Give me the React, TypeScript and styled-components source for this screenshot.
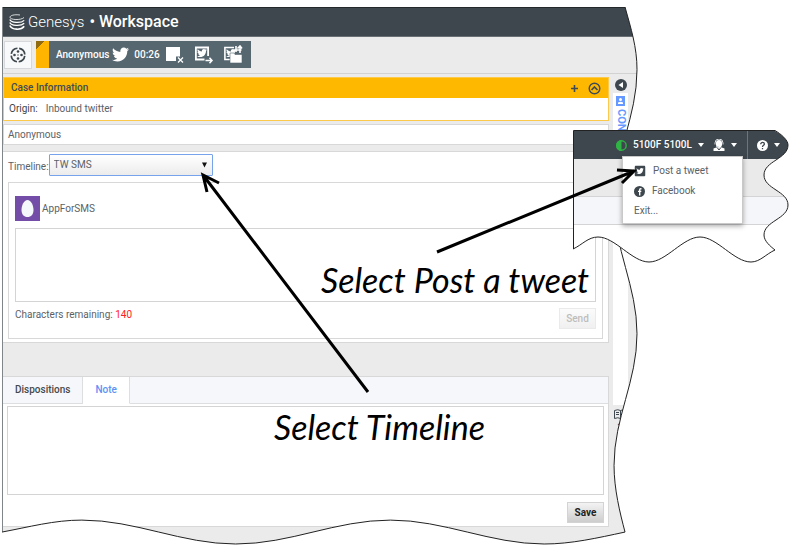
import React from "react";
import styled, { createGlobalStyle, css } from "styled-components";
import { FaTwitter, FaTwitterSquare } from "react-icons/fa";

const GlobalStyle = createGlobalStyle`
  *, *::before, *::after { box-sizing: border-box; }
  html, body { margin: 0; background: #fff; }
  body { font: 10px/14px Roboto, "Liberation Sans", sans-serif; color: #5b6267; overflow-x: hidden; }
  button, select, textarea { font: inherit; color: inherit; margin: 0; }
  button { padding: 0; border: 0; background: none; cursor: pointer; }
  svg { display: block; }
`;

const Stage = styled.div`
  position: relative;
  padding: 7px 162px 13px 2px;
`;

const Window = styled.main`
  position: relative;
  background: #ebebeb;
  border-left: 1px solid #808688;
  padding-bottom: 18px;
`;

const TitleBar = styled.header`
  display: flex;
  align-items: center;
  height: 30px;
  padding: 0 6px;
  background: #3d474d;
  border-top: 1px solid #23282b;
  border-bottom: 1px solid #687075;
  color: #fff;
  font-size: 16px;
  line-height: 20px;
`;

const Brand = styled.span`
  margin-left: 3px;
  font-size: 15px;
  font-weight: 300;
`;

const Product = styled.h1`
  margin: 0;
  margin-left: 5px;
  font-size: 16px;
  font-weight: 500;
`;

const Toolbar = styled.div`
  display: flex;
  align-items: center;
  height: 37px;
  padding: 0 1px 1px;
  gap: 4px;
  border-bottom: 1px solid #d2d2d2;
`;

const SquareButton = styled.button`
  display: grid;
  place-items: center;
  width: 28px;
  height: 28px;
  background: #f8f9fb;
  border: 1px solid #d6d8db;
`;

const Interaction = styled.div`
  display: flex;
  align-items: center;
  height: 27px;
  padding-right: 8px;
  background: #566770;
  color: #fff;
  font-weight: 500;
`;

const Flag = styled.span`
  width: 13px;
  height: 27px;
  margin-right: 7px;
  background: linear-gradient(135deg, #8f6a10 0 6px, #ffb400 6px);
`;

const InteractionIcon = styled.button<{ $gap?: number }>`
  display: grid;
  place-items: center;
  margin-left: ${(p) => p.$gap ?? 9}px;
`;

const Timer = styled.span`
  margin-left: 5px;
`;

const Body = styled.div`
  display: grid;
  grid-template-columns: minmax(0, 1fr) 15px;
  column-gap: 4px;
  padding: 3px 10px 0 0;
`;

const Column = styled.div`
  min-width: 0;
`;

const CaseBox = styled.section`
  background: #fff;
  border: 1px solid #fcc94a;
`;

const CaseHeader = styled.div`
  display: flex;
  align-items: center;
  height: 20px;
  padding: 0 7px;
  background: #ffb800;
  color: #3f4c55;
`;

const CaseTitle = styled.h2`
  flex: 1;
  margin: 0;
  font-size: 10px;
  font-weight: 500;
`;

const HeaderActions = styled.div`
  display: flex;
  align-items: center;
  gap: 10px;
`;

const Field = styled.div`
  display: flex;
  gap: 8px;
  height: 22px;
  padding: 4px 5px;
`;

const FieldLabel = styled.span`
  color: #3f4548;
`;

const ContactBar = styled.div`
  height: 21px;
  margin-top: 3px;
  padding: 3px 4px;
  background: #fff;
  border: 1px solid #d8d8d8;
`;

const Panel = styled.section`
  background: #fff;
  border: 1px solid #d8d8d8;
  border-left: 0;
`;

const TimelinePanel = styled(Panel)`
  margin-top: 6px;
  padding: 2px 5px 3px;
`;

const TimelineRow = styled.div`
  display: flex;
  align-items: center;
  height: 22px;
`;

const TimelineLabel = styled.label`
  padding-top: 3px;
`;

const SelectWrap = styled.div`
  position: relative;
  width: 164px;
`;

const Select = styled.select`
  display: block;
  width: 100%;
  height: 22px;
  padding: 0 4px;
  appearance: none;
  background: linear-gradient(#fff, #ececec);
  border: 1px solid #76a3ec;
  border-radius: 1px;
  outline: 0;
`;

const Caret = styled.svg`
  position: absolute;
  top: 8px;
  right: 6px;
  pointer-events: none;
`;

const Composer = styled.div`
  margin-top: 6px;
  padding: 13px 6px 9px;
  border: 1px solid #d8d8d8;
`;

const Sender = styled.div`
  display: flex;
  align-items: center;
  gap: 2px;
  margin-bottom: 7px;
`;

const Avatar = styled.span`
  display: grid;
  place-items: center;
  width: 25px;
  height: 25px;
  background: #744da9;
`;

const TextBox = styled.textarea<{ $rows: number }>`
  display: block;
  width: 100%;
  height: ${(p) => p.$rows}px;
  resize: none;
  background: #fff;
  border: 1px solid #d4d4d4;
  outline: 0;
`;

const ComposerFooter = styled.div`
  display: flex;
  align-items: flex-start;
  justify-content: space-between;
  padding-top: 6px;
`;

const Remaining = styled.span`
  strong { color: #ff2020; font-weight: 400; }
`;

const ActionButton = styled.button`
  width: 37px;
  height: 21px;
  background: linear-gradient(#f3f3f3, #cdcdcd);
  border: 1px solid #d3d3d3;
  color: #222;
  font-weight: 700;

  &:disabled {
    background: linear-gradient(#fbfbfb, #f0f0f0);
    border-color: #eaeaea;
    color: #bdbdbd;
    font-weight: 500;
    cursor: default;
  }
`;

const NotePanel = styled(Panel)`
  margin-top: 33px;
`;

const Tabs = styled.div`
  display: flex;
  height: 27px;
  background: #f5f7fa;
`;

const Tab = styled.button<{ $active?: boolean }>`
  padding: 0 12px;
  border-right: 1px solid #dcdee0;
  border-bottom: 1px solid #dcdee0;
  color: #45494d;
  font-weight: 500;
  ${(p) =>
    p.$active &&
    css`
      background: #fff;
      border-bottom-color: #fff;
      color: #5c93f5;
    `}
`;

const TabFill = styled.div`
  flex: 1;
  border-bottom: 1px solid #dcdee0;
`;

const NoteBody = styled.div`
  padding: 2px 4px 3px;
`;

const NoteFooter = styled.div`
  display: flex;
  justify-content: flex-end;
  padding-top: 7px;
`;

const Rail = styled.aside`
  display: flex;
  flex-direction: column;
`;

const RailToggle = styled.button`
  display: grid;
  place-items: center;
  height: 16px;
`;

const RailTab = styled.button<{ $active?: boolean }>`
  display: flex;
  flex-direction: column;
  align-items: center;
  gap: 3px;
  height: ${(p) => (p.$active ? 312 : 100)}px;
  padding-top: ${(p) => (p.$active ? 3 : 4)}px;
  background: ${(p) => (p.$active ? "#fff" : "transparent")};
  color: ${(p) => (p.$active ? "#6699ff" : "#3d474d")};
  font-size: 11px;
  line-height: 14px;
  font-weight: 700;
  span { writing-mode: vertical-rl; }
`;

const TornEdge = styled.svg`
  position: absolute;
  top: 0;
  left: -1px;
  width: calc(100% + 3px);
  height: calc(100% + 1px);
  pointer-events: none;
`;

const Inset = styled.section`
  position: absolute;
  top: 130px;
  right: 10px;
  width: 217px;
  height: 134px;
`;

const InsetPage = styled.div`
  height: 100%;
  background: #fff;
  clip-path: path("M0 1 H202 C208 4 215 10 215 15 C215 29 191 31 191 45 C191 59 215 61 215 75 C215 89 191 91 191 105 C191 111 197 116 202 120 C193 124 187 132 178 132 C161 132 144 107 127 107 C110 107 93 132 76 132 C59 132 42 107 25 107 C15 107 9 115 0 119 Z");
`;

const InsetBar = styled.div`
  display: flex;
  align-items: center;
  height: 29px;
  padding: 1px 0 0 43px;
  background: #3d474d;
  color: #fff;
  font-weight: 500;
`;

const BarButton = styled.button`
  display: flex;
  align-items: center;
  gap: 6px;
`;

const BarGroup = styled.div`
  display: flex;
  align-items: center;
  height: 100%;
  padding: 0 10px 0 9px;
  border-right: 1px solid #6c757a;
`;

const HelpGroup = styled.div`
  padding-left: 9px;
`;

const InsetBand = styled.div<{ $tone: "dark" | "light" }>`
  height: ${(p) => (p.$tone === "dark" ? 38 : 28)}px;
  background: ${(p) => (p.$tone === "dark" ? "#eaeaea" : "#f5f6f9")};
  border-bottom: 1px solid #d4d4d6;
`;

const InsetEdge = styled.svg`
  position: absolute;
  inset: 0;
  pointer-events: none;
`;

const Menu = styled.ul`
  position: absolute;
  top: 26px;
  left: 49px;
  width: 121px;
  margin: 0;
  padding: 4px 0 2px;
  list-style: none;
  background: #fff;
  border: 1px solid #c9c9c9;
  box-shadow: 0 2px 5px rgba(0, 0, 0, 0.35);
`;

const MenuItem = styled.button`
  display: flex;
  align-items: center;
  gap: 7px;
  width: 100%;
  height: 20px;
  padding: 0 11px;
`;

const Arrows = styled.svg`
  position: absolute;
  top: 0;
  left: 0;
  pointer-events: none;
`;

const Callout = styled.p<{ $x: number; $y: number }>`
  position: absolute;
  left: ${(p) => p.$x}px;
  top: ${(p) => p.$y}px;
  margin: 0;
  color: #000;
  font: italic 400 34px/40px "Segoe Print", Lato, cursive;
  white-space: nowrap;
`;

const Down = () => (
  <svg width="6" height="4" viewBox="0 0 6 4"><path d="M0 0h6L3 4z" fill="#fff" /></svg>
);

const TEAR_RIGHT =
  "C630 22 636 40 636 63 C636 111 613 147 613 195 C613 243 636 280 636 328 C636 376 613 412 613 460 C613 484 619 508 624 527";
const TEAR_BOTTOM =
  "C596 533 570 539 543 539 C489 539 443 515 389 515 C334 515 289 539 234 539 C180 539 134 515 80 515 C52 515 27 522 0 527";
const INSET_LINE =
  "M0.5 119 V0.5 H202 C208 4 215 10 215 15 C215 29 191 31 191 45 C191 59 215 61 215 75 C215 89 191 91 191 105 C191 111 197 116 202 120 C193 124 187 132 178 132 C161 132 144 107 127 107 C110 107 93 132 76 132 C59 132 42 107 25 107 C15 107 9 115 0 119";

export default function App() {
  return (
    <>
      <GlobalStyle />
      <Stage>
        <Window>
          <TitleBar>
            <svg width="16" height="17" viewBox="0 0 16 17" fill="none" stroke="#fff">
              <path d="M11 1C5 .2 1 1.500 1 3.300 1 6 12 6.500 15 3.500" strokeWidth=".8" />
              <path d="M.8 5.500C2 9 12 9.500 15.200 6.300" strokeWidth="1.200" />
              <path d="M.8 8.500C2 12 12 12.500 15.200 9.300" strokeWidth="1.300" />
              <path d="M.8 11.500C3 16 12 16.500 15.200 12.300" strokeWidth="1.600" />
            </svg>
            <Brand>Genesys</Brand>
            <Product>• Workspace</Product>
          </TitleBar>

          <Toolbar>
            <SquareButton aria-label="Interactions">
              <svg width="16" height="16" viewBox="0 0 16 16" fill="none" stroke="#3d474d">
                <circle cx="8" cy="8" r="6.800" strokeWidth="1.700" strokeDasharray="8.900 1.780" strokeDashoffset="-1" />
                <g fill="#3d474d" stroke="none">
                  <circle cx="8" cy="4.500" r="1.300" /><circle cx="8" cy="11.500" r="1.300" />
                  <circle cx="4.500" cy="8" r="1.300" /><circle cx="11.500" cy="8" r="1.300" />
                  <circle cx="8" cy="8" r=".7" />
                </g>
              </svg>
            </SquareButton>
            <Interaction>
              <Flag />
              <span>Anonymous</span>
              <InteractionIcon $gap={3} aria-label="Twitter"><FaTwitter size={17} /></InteractionIcon>
              <Timer>00:26</Timer>
              <InteractionIcon $gap={5} aria-label="Mark done">
                <svg width="20" height="20" viewBox="0 0 20 20" fill="#fff">
                  <path d="M1 2h14v9.500h-4V16H1z" />
                  <path d="M13 12.500l5 5m0-5l-5 5" stroke="#fff" strokeWidth="1.300" />
                </svg>
              </InteractionIcon>
              <InteractionIcon aria-label="Transfer">
                <svg width="20" height="20" viewBox="0 0 20 20" fill="none" stroke="#fff" strokeWidth="1.800">
                  <path d="M10.500 14.500H1.900V2.500h12.200v8.500" />
                  <path d="M11.500 15.500h6.500m-2.500-2.700l2.500 2.700-2.500 2.700" strokeWidth="1.500" />
                  <g transform="translate(3 3)" stroke="none"><FaTwitter size={10} color="#fff" /></g>
                </svg>
              </InteractionIcon>
              <InteractionIcon aria-label="Move to workbin">
                <svg width="20" height="20" viewBox="0 0 20 20" fill="#fff">
                  <path d="M7 14.500H1.900V2.500H11M17 1v7M14.500 3.500L17 1l2 2.500M13 1v6M11.500 5h7" fill="none" stroke="#fff" strokeWidth="1.600" />
                  <g transform="translate(3 3)"><FaTwitter size={10} /></g>
                  <path d="M7 8h4l1 1.500h7V18H7z" stroke="#566770" strokeWidth=".6" />
                </svg>
              </InteractionIcon>
            </Interaction>
          </Toolbar>

          <Body>
            <Column>
              <CaseBox>
                <CaseHeader>
                  <CaseTitle>Case Information</CaseTitle>
                  <HeaderActions>
                    <button aria-label="Add">
                      <svg width="7" height="7" viewBox="0 0 7 7"><path d="M3.500 0v7M0 3.500h7" stroke="#3f4c55" strokeWidth="1.600" /></svg>
                    </button>
                    <button aria-label="Collapse">
                      <svg width="13" height="13" viewBox="0 0 13 13" fill="none" stroke="#3f4c55" strokeWidth="1.400">
                        <circle cx="6.500" cy="6.500" r="5.300" /><path d="M3.500 8l3-3 3 3" strokeWidth="1.700" />
                      </svg>
                    </button>
                  </HeaderActions>
                </CaseHeader>
                <Field><FieldLabel>Origin:</FieldLabel><span>Inbound twitter</span></Field>
              </CaseBox>
              <ContactBar>Anonymous</ContactBar>

              <TimelinePanel>
                <TimelineRow>
                  <TimelineLabel htmlFor="timeline">Timeline:</TimelineLabel>
                  <SelectWrap>
                    <Select id="timeline" defaultValue="tw"><option value="tw">TW SMS</option></Select>
                    <Caret width="5" height="6" viewBox="0 0 6 6"><path d="M0 0h6L3 6z" fill="#111" /></Caret>
                  </SelectWrap>
                </TimelineRow>
                <Composer>
                  <Sender>
                    <Avatar>
                      <svg width="13" height="17" viewBox="0 0 13 17"><path d="M6.500 0C10 0 12.500 5.500 12.500 10S10 17 6.500 17 .5 14.500.5 10 3 0 6.500 0z" fill="#f5f8fa" /></svg>
                    </Avatar>
                    <span>AppForSMS</span>
                  </Sender>
                  <TextBox $rows={74} aria-label="Message" />
                  <ComposerFooter>
                    <Remaining>Characters remaining: <strong>140</strong></Remaining>
                    <ActionButton disabled>Send</ActionButton>
                  </ComposerFooter>
                </Composer>
              </TimelinePanel>

              <NotePanel>
                <Tabs role="tablist">
                  <Tab role="tab" aria-selected="false">Dispositions</Tab>
                  <Tab role="tab" aria-selected="true" $active>Note</Tab>
                  <TabFill />
                </Tabs>
                <NoteBody>
                  <TextBox $rows={89} aria-label="Note" />
                  <NoteFooter><ActionButton>Save</ActionButton></NoteFooter>
                </NoteBody>
              </NotePanel>
            </Column>

            <Rail>
              <RailToggle aria-label="Expand">
                <svg width="12" height="12" viewBox="0 0 12 12"><circle cx="6" cy="6" r="6" fill="#3d474d" /><path d="M8 3v6L3.500 6z" fill="#fff" /></svg>
              </RailToggle>
              <RailTab $active>
                <svg width="9" height="10" viewBox="0 0 9 10"><path d="M0 0h9v10H0z" fill="#6699ff" /><circle cx="4.500" cy="3.500" r="1.500" fill="#fff" /><path d="M2 8V6.500Q4.500 4.800 7 6.500V8z" fill="#fff" /></svg>
                <span>CONTACT</span>
              </RailTab>
              <RailTab>
                <svg width="13" height="11" viewBox="0 0 13 11" fill="none" stroke="#3d474d">
                  <path d="M.5 1.500Q4 0 6.500 1.500 9 0 12.500 1.500v8Q9 8 6.500 9.500 4 8 .5 9.500zM6.500 1.500v8M2 3.500h3M2 5.500h3M8 3.500h3M8 5.500h3" />
                </svg>
                <span>RESPONSES</span>
              </RailTab>
            </Rail>
          </Body>

          <TornEdge viewBox="0 0 639 541" preserveAspectRatio="none">
            <path d={`M624 0 ${TEAR_RIGHT} ${TEAR_BOTTOM} V545 H645 V-2 H624 Z`} fill="#fff" />
            <path d={`M624 0 ${TEAR_RIGHT} ${TEAR_BOTTOM}`} fill="none" stroke="#222" vectorEffect="non-scaling-stroke" />
          </TornEdge>
        </Window>

        <Inset>
          <InsetPage>
            <InsetBar>
              <BarButton>
                <svg width="11" height="11" viewBox="0 0 11 11"><circle cx="5.500" cy="5.500" r="4.700" fill="none" stroke="#2fb344" strokeWidth="1.400" /><path d="M5.500 0a5.500 5.500 0 000 11z" fill="#2fb344" /></svg>
                <span>5100F 5100L</span>
                <Down />
              </BarButton>
              <BarGroup>
                <BarButton aria-label="Agent">
                  <svg width="12" height="12" viewBox="0 0 12 12" fill="#fff">
                    <path d="M3 4a3 3 0 016 0v1.500a3 3 0 01-6 0zM.5 12V9.500Q6 7 11.500 9.500V12z" />
                    <path d="M2 5.500V4a4 4 0 018 0v1.500M3 7l3 1" fill="none" stroke="#d8dde0" />
                    <path d="M4.500 9l1.500 2 1.500-2" stroke="#3d474d" fill="none" />
                  </svg>
                  <Down />
                </BarButton>
              </BarGroup>
              <HelpGroup>
                <BarButton aria-label="Help">
                  <svg width="11" height="11" viewBox="0 0 11 11"><circle cx="5.500" cy="5.500" r="5.500" fill="#fff" /><path d="M3.700 4.200c0-2.400 3.700-2.200 3.700-.1C7.400 5.400 5.500 5.300 5.500 7M5.500 8v1.200" fill="none" stroke="#3d474d" strokeWidth="1.300" /></svg>
                  <Down />
                </BarButton>
              </HelpGroup>
            </InsetBar>
            <InsetBand $tone="dark" />
            <InsetBand $tone="light" />
          </InsetPage>
          <InsetEdge width="217" height="134"><path d={INSET_LINE} fill="none" stroke="#222" /></InsetEdge>
          <Menu>
            <li><MenuItem><FaTwitterSquare size={12} color="#3d474d" />Post a tweet</MenuItem></li>
            <li>
              <MenuItem>
                <svg width="11" height="11" viewBox="0 0 11 11"><circle cx="5.500" cy="5.500" r="5.500" fill="#3d474d" /><path d="M7.500 2.700H6.700Q5.700 2.700 5.700 3.700V9.500M4 5.400h3.300" fill="none" stroke="#fff" strokeWidth="1.400" /></svg>
                Facebook
              </MenuItem>
            </li>
            <li><MenuItem>Exit...</MenuItem></li>
          </Menu>
        </Inset>

        <Arrows width="640" height="400" fill="none" stroke="#000" strokeWidth="3">
          <path d="M368 392L203 175M207 192L203 175L219 183" />
          <path d="M437 252L634 171M617 170L634 171L622 183" />
        </Arrows>
        <Callout $x={321} $y={260}>Select Post a tweet</Callout>
        <Callout $x={274} $y={407}>Select Timeline</Callout>
      </Stage>
    </>
  );
}
